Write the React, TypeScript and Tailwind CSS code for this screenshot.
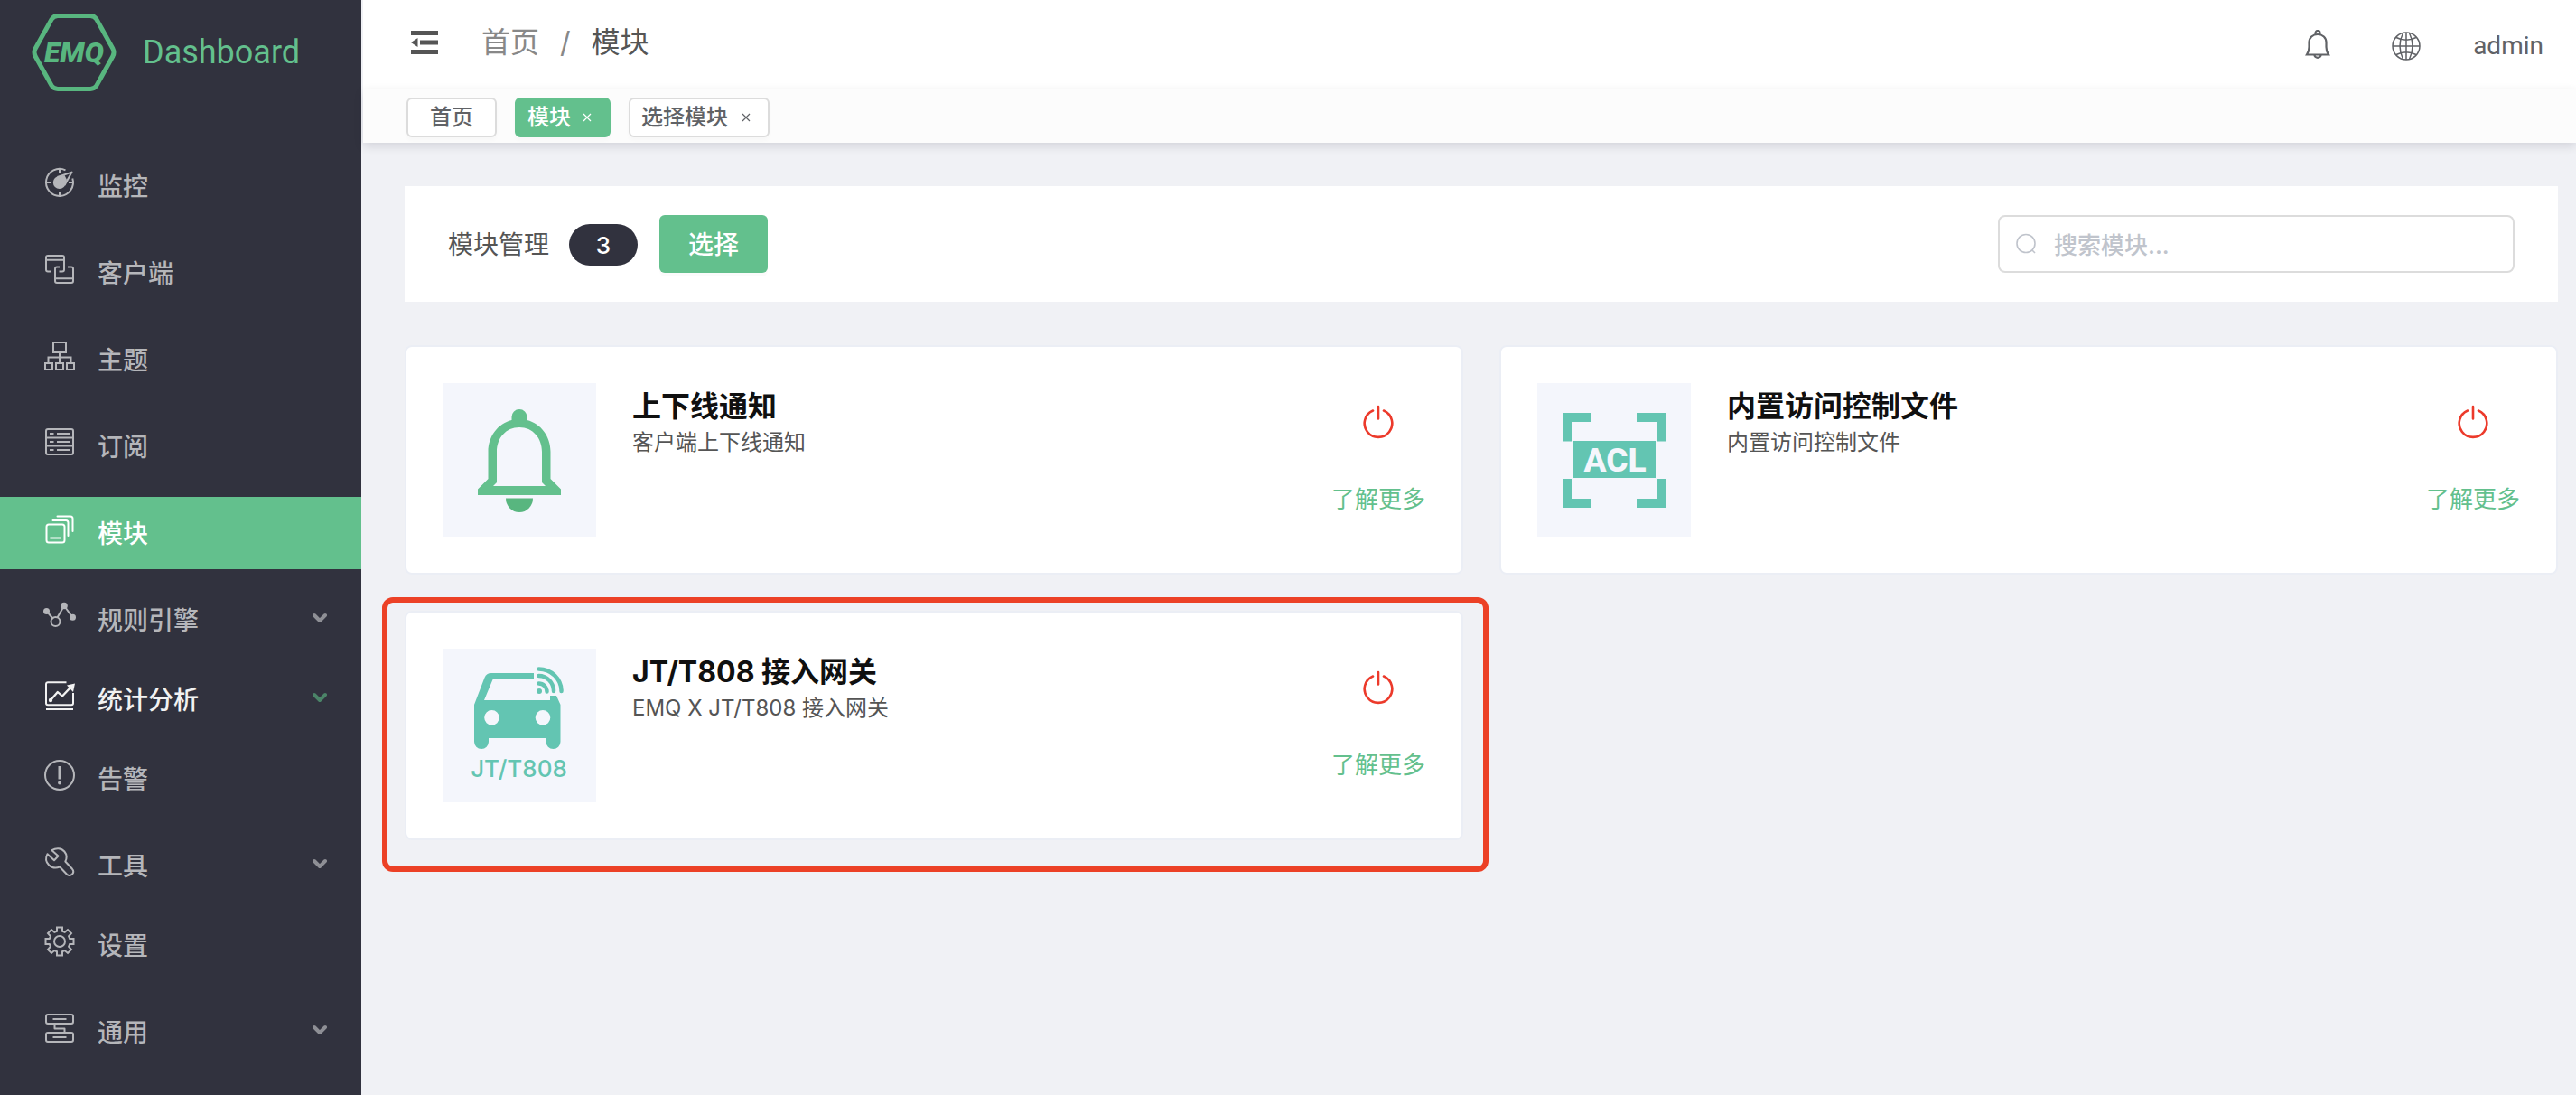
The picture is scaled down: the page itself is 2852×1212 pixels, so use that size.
import React, { type ReactNode } from "react";

const Icon = ({ children, size = 32 }: { children: ReactNode; size?: number }) => (
  <svg
    width={size}
    height={size}
    viewBox="0 0 32 32"
    fill="none"
    stroke="currentColor"
    strokeWidth="2"
    strokeLinejoin="round"
    className="shrink-0 overflow-visible"
    aria-hidden="true"
  >
    {children}
  </svg>
);

const MonitorIcon = () => (
  <Icon>
    <path d="M22.500 2.400A15 15 0 1 0 30.300 11.500" />
    <path d="M16 1v5M16 26v5M1 16h5M26 16h5" />
    <path d="M13.500 10L29.500 4.600L21.500 19" />
    <circle cx="15.800" cy="16" r="7" fill="currentColor" stroke="none" />
    <path d="M15 9.500L21.500 8L24 13L21.500 18.500Z" fill="currentColor" stroke="none" />
  </Icon>
);

const ClientIcon = () => (
  <Icon>
    <path d="M7 18.500H3a2 2 0 0 1-2-2V3a2 2 0 0 1 2-2h16a2 2 0 0 1 2 2v13.500a2 2 0 0 1-2 2h-3.500M1 5.800h20" />
    <path d="M25 13.500h4a2 2 0 0 1 2 2V29a2 2 0 0 1-2 2H13a2 2 0 0 1-2-2V15.500a2 2 0 0 1 2-2h3M11 26.200h20" />
  </Icon>
);

const TopicIcon = () => (
  <Icon>
    <path strokeLinejoin="miter" d="M9 1h14v11H9zM16 12v11M3.500 23v-5.500h25V23M0 24h8v7H0zM12 24h8v7h-8zM24 24h8v7h-8z" />
  </Icon>
);

const SubscribeIcon = () => (
  <Icon>
    <rect x="1" y="1" width="30" height="28" rx="2" />
    <path d="M1 10.500h30M1 19.500h30M5 6h4.500M13 6h14M5 15h4.500M13 15h14M5 24h4.500M13 24h14" />
  </Icon>
);

const ModuleIcon = () => (
  <Icon>
    <rect x="1.500" y="10.500" width="20" height="20" rx="2.500" />
    <path strokeLinecap="round" d="M6 25.500h11M8.500 6H23a2.500 2.500 0 0 1 2.500 2.500V23M13.500 1.500H28a2.500 2.500 0 0 1 2.500 2.500v14" />
  </Icon>
);

const RuleIcon = () => (
  <Icon>
    <path d="M1.500 10.500L9 19M13.500 17.500L21 4.500L30.500 17.500" />
    <circle cx="11.500" cy="22" r="5" />
    <g fill="currentColor" stroke="none">
      <circle cx="1.500" cy="10.500" r="3.500" />
      <circle cx="21" cy="4.500" r="3.800" />
      <circle cx="30.500" cy="17.300" r="3.500" />
    </g>
  </Icon>
);

const StatsIcon = () => (
  <Icon>
    <path d="M23.500 1.200H3a2 2 0 0 0-2 2v21a2 2 0 0 0 2 2h26a2 2 0 0 0 2-2V13M1 31h30" />
    <path d="M6 21L13.800 12L19 16.500L28 7" strokeWidth="2.300" />
    <circle cx="6" cy="21" r="2.200" fill="currentColor" stroke="none" />
    <path d="M24 4.500L33 2.500L31 12Z" fill="currentColor" stroke="none" />
  </Icon>
);

const AlarmIcon = () => (
  <Icon>
    <circle cx="16" cy="16" r="16" />
    <path d="M16 6v14.500" strokeWidth="3" />
    <circle cx="16" cy="24.500" r="1.900" fill="currentColor" stroke="none" />
  </Icon>
);

const ToolIcon = () => (
  <Icon>
    <path d="M7.500 3.200C12 0.200 18 0.500 21.300 4.500C24 7.800 24.200 11.800 22.300 15.500L30 23.800C31.500 25.500 31.500 28 29.800 29.800C28 31.500 25.500 31.300 24 29.800L16.200 21.500C12 23.200 7.500 22.700 4.200 19.500C0.800 16.200 0.200 11.500 2.500 7.200L10 14.200L14.500 9.500Z" />
  </Icon>
);

const SettingsIcon = () => (
  <Icon>
    <path
      strokeLinejoin="miter"
      d="M13 0.500h6v4.300l2.700 1.100 3.300-2.900 4 4-2.900 3.300 1.100 2.700h4.300v6h-4.300l-1.100 2.700 2.900 3.300-4 4-3.300-2.900-2.700 1.100v4.300h-6v-4.300l-2.700-1.100-3.300 2.900-4-4 2.900-3.300-1.100-2.700H0.500v-6h4.300l1.100-2.700-2.900-3.300 4-4 3.300 2.900 2.700-1.100z"
    />
    <circle cx="16" cy="16" r="6" />
  </Icon>
);

const GeneralIcon = () => (
  <Icon>
    <rect x="1" y="1" width="30" height="10" rx="2" />
    <rect x="1" y="21" width="30" height="10" rx="2" />
    <path d="M8.500 6h15M8.500 26h15M10.500 11v5.500h11V21" />
  </Icon>
);

const navItems: { label: string; icon: ReactNode; sub?: boolean; state?: "active" | "open" }[] = [
  { label: "监控", icon: <MonitorIcon /> },
  { label: "客户端", icon: <ClientIcon /> },
  { label: "主题", icon: <TopicIcon /> },
  { label: "订阅", icon: <SubscribeIcon /> },
  { label: "模块", icon: <ModuleIcon />, state: "active" },
  { label: "规则引擎", icon: <RuleIcon />, sub: true },
  { label: "统计分析", icon: <StatsIcon />, sub: true, state: "open" },
  { label: "告警", icon: <AlarmIcon /> },
  { label: "工具", icon: <ToolIcon />, sub: true },
  { label: "设置", icon: <SettingsIcon /> },
  { label: "通用", icon: <GeneralIcon />, sub: true },
];

const Sidebar = () => (
  <aside className="w-[400px] shrink-0 overflow-hidden bg-[#31323e]">
    <div className="flex h-[116px] items-center gap-7 pl-[34px]">
      <svg width="96" height="88" viewBox="0 0 96 88" className="shrink-0" role="img" aria-label="EMQ">
        <path
          d="M30 3.500H66Q70.500 3.500 73 7.500L91 40Q93 44 91 48L73 80.500Q70.500 84.500 66 84.500H30Q25.500 84.500 23 80.500L5 48Q3 44 5 40L23 7.500Q25.500 3.500 30 3.500Z"
          fill="none"
          stroke="#58b67f"
          strokeWidth="5"
        />
        <text x="48" y="55" textAnchor="middle" fill="#58b67f" fontSize="32" fontStyle="italic" fontWeight="900" fontFamily="Roboto, sans-serif">
          EMQ
        </text>
      </svg>
      <span className="font-['Roboto',sans-serif] text-[36px] leading-none text-[#63c08d]">Dashboard</span>
    </div>
    <nav className="pt-[50px]">
      <ul>
        {navItems.map((item) => (
          <li key={item.label} className={item.sub ? "mb-2" : "mb-4"}>
            <a
              href="#"
              className={`flex h-20 items-center gap-[26px] pr-[38px] pl-[50px] text-[28px] font-medium ${
                item.state === "active" ? "bg-[#63c08d] text-white" : item.state === "open" ? "text-[#f2f2f2]" : "text-[#b5b6ba]"
              }`}
            >
              <span className="pb-2">{item.icon}</span>
              <span className="flex-1 pt-0.5">{item.label}</span>
              {item.sub && (
                <svg
                  width="16"
                  height="12"
                  viewBox="0 0 16 12"
                  className={`mb-1 ${item.state === "open" ? "text-[#4b8468]" : "text-[#8e8f95]"}`}
                  fill="none"
                  stroke="currentColor"
                  strokeWidth="4"
                  strokeLinecap="round"
                  strokeLinejoin="round"
                  aria-hidden="true"
                >
                  <path d="M2 3L8 9L14 3" />
                </svg>
              )}
            </a>
          </li>
        ))}
      </ul>
    </nav>
  </aside>
);

const Header = () => (
  <header className="flex h-[98px] items-center bg-white pr-9 pl-[53px]">
    <button type="button" aria-label="折叠菜单" className="mb-1 text-[#555]">
      <svg width="30" height="26" viewBox="0 0 30 26" fill="currentColor" aria-hidden="true">
        <path d="M0 0h30v5H0zM10 10.500h20v5H10zM0 21h30v5H0zM7.500 8v10L0 13z" />
      </svg>
    </button>
    <nav aria-label="面包屑" className="mb-1 ml-12 flex items-center gap-[23px] text-[32px] leading-10 text-[#888]">
      <a href="#">首页</a>
      <span>/</span>
      <span className="text-[#555]">模块</span>
    </nav>
    <div className="ml-auto flex items-center text-[#606266]">
      <button type="button" aria-label="通知" className="mr-[68px]">
        <svg width="28" height="32" viewBox="0 0 28 32" fill="none" stroke="currentColor" strokeWidth="2.200" aria-hidden="true">
          <path d="M2 27.500Q4.500 24 4.500 19V14C4.500 8.500 8.500 5 14 5S23.500 8.500 23.500 14V19Q23.500 24 26 27.500Z" />
          <path d="M11.500 5V3.500A2.500 2.500 0 0 1 16.500 3.500V5M10.500 28A3.500 2.800 0 0 0 17.500 28" />
        </svg>
      </button>
      <button type="button" aria-label="语言" className="mt-1 mr-[58px]">
        <svg width="32" height="32" viewBox="0 0 32 32" fill="none" stroke="currentColor" strokeWidth="1.500" aria-hidden="true">
          <circle cx="16" cy="16" r="15" />
          <path d="M16 1v30M1 16h30M12.500 1.500Q5.500 16 12.500 30.500M19.500 1.500Q26.500 16 19.500 30.500M5 6.500Q16 12 27 6.500M5 25.500Q16 20 27 25.500" />
        </svg>
      </button>
      <button type="button" className="mt-1 font-['Roboto',sans-serif] text-[28px] leading-10">
        admin
      </button>
    </div>
  </header>
);

const CloseMark = () => (
  <svg width="10" height="10" viewBox="0 0 10 10" stroke="currentColor" strokeWidth="1.200" aria-hidden="true">
    <path d="M1 1l8 8M9 1l-8 8" />
  </svg>
);

const tag = "flex h-11 items-center rounded-md border-2 text-2xl font-medium shadow-[0_4px_4px_rgba(0,0,0,0.02)]";

const TagBar = () => (
  <div className="relative flex h-[60px] items-end gap-5 bg-[#fcfcfc] pb-1.5 pl-12 shadow-[0_4px_10px_rgba(0,10,40,0.12)]">
    <a href="#" className={`${tag} border-[#dcdcdc] bg-white px-6 text-[#606266]`}>
      首页
    </a>
    <div className={`${tag} border-[#63c08d] bg-[#63c08d] pr-[19px] pl-3 text-white`}>
      <a href="#">模块</a>
      <button type="button" aria-label="关闭 模块" className="ml-[13px]">
        <CloseMark />
      </button>
    </div>
    <div className={`${tag} border-[#dcdcdc] bg-white pr-[19px] pl-3 text-[#606266]`}>
      <a href="#">选择模块</a>
      <button type="button" aria-label="关闭 选择模块" className="ml-[15px]">
        <CloseMark />
      </button>
    </div>
  </div>
);

const Toolbar = () => (
  <section className="flex h-32 items-center bg-white px-12">
    <h1 className="pt-0.5 text-[28px] text-[#555]">模块管理</h1>
    <span className="mt-0.5 ml-[22px] flex h-[46px] w-[76px] items-center justify-center rounded-full bg-[#31323e] text-[26px] font-medium text-white">
      3
    </span>
    <button
      type="button"
      className="ml-6 h-16 rounded-md bg-[#63c08d] px-8 pt-0.5 text-[28px] font-medium text-white shadow-[0_4px_0_rgba(0,0,0,0.015)]"
    >
      选择
    </button>
    <label className="ml-auto flex h-16 w-[572px] items-center gap-[18px] rounded-lg border-2 border-[#dcdcdc] bg-white pl-[18px]">
      <svg width="24" height="24" viewBox="0 0 24 24" fill="none" stroke="#c0c4cc" strokeWidth="1.600" aria-hidden="true">
        <circle cx="11" cy="11.500" r="10" />
        <path d="M18 19l3 3" />
      </svg>
      <input
        type="search"
        aria-label="搜索模块"
        placeholder="搜索模块..."
        className="min-w-0 flex-1 bg-transparent pt-0.5 text-[26px] font-medium text-[#555] outline-none placeholder:text-[#c0c4cc]"
      />
    </label>
  </section>
);

const BellArt = () => (
  <svg viewBox="0 0 170 170" aria-hidden="true">
    <path
      fill="#63c08d"
      fillRule="evenodd"
      d="M76.500 41V37.500A8.500 8.500 0 0 1 93.500 37.500V41C109 45 119.500 59 119.500 76V106L131 117.500V124H39V117.500L50.500 106V76C50.500 59 61 45 76.500 41ZM85 49C70 49 60 61 60 76V110L56 114H114L110 110V76C110 61 100 49 85 49Z"
    />
    <path fill="#58b67f" d="M70 127.500H100A15 15.500 0 0 1 70 127.500Z" />
  </svg>
);

const AclArt = () => (
  <svg viewBox="0 0 170 170" aria-hidden="true">
    <path
      fill="#63c5b2"
      d="M28 33h32v10H38v21.500H28zM110 33h32v31.500h-10V43h-22zM28 106h10v22h22v10H28zM132 106h10v32h-32v-10h22zM39 64h92v41H39z"
    />
    <text x="86" y="98" textAnchor="middle" fill="#f4f6fc" fontSize="37" fontWeight="800" fontFamily="Roboto, sans-serif">
      ACL
    </text>
  </svg>
);

const CarArt = () => (
  <svg viewBox="0 0 170 170" aria-hidden="true">
    <path
      fill="#63c5b2"
      fillRule="evenodd"
      d="M101 27V33H56L46 57H119V52H126L130.500 62V103A8 8 0 0 1 114.500 103V99H51V103A8 8 0 0 1 35 103V62L46.500 32Q48.500 27 54 27ZM54.500 68A8.300 8.300 0 1 0 54.500 84.600A8.300 8.300 0 1 0 54.500 68ZM111 68A8.300 8.300 0 1 0 111 84.600A8.300 8.300 0 1 0 111 68Z"
    />
    <circle cx="107" cy="47" r="3" fill="#63c5b2" />
    <g fill="none" stroke="#63c5b2" strokeWidth="4.500" strokeLinecap="round">
      <path d="M106.500 38.500A9 9 0 0 1 115.500 47.500M106.500 30A16.500 17 0 0 1 123 47M106.500 22.500A25 24.500 0 0 1 131.500 47" />
    </g>
    <text x="84.500" y="141.500" textAnchor="middle" fill="#63c5b2" fontSize="26" fontWeight="500" fontFamily="Inter, sans-serif">
      JT/T808
    </text>
  </svg>
);

const PowerIcon = () => (
  <svg width="36" height="38" viewBox="0 0 36 38" fill="none" stroke="#ec3a2b" strokeWidth="2.600" strokeLinecap="round" aria-hidden="true">
    <path d="M12 6.500A15.300 15.300 0 1 0 24 6.500M18 2v13.500" />
  </svg>
);

const ModuleCard = ({
  title,
  desc,
  art,
  highlighted = false,
}: {
  title: string;
  desc: string;
  art: ReactNode;
  highlighted?: boolean;
}) => (
  <article className="relative flex rounded-lg border-2 border-[#ebeef5] bg-white p-10">
    <div className="size-[170px] shrink-0 bg-[#f4f6fc]">{art}</div>
    <div className="ml-10 flex-1 pt-0.5">
      <h2 className="text-[32px] leading-[48px] font-bold text-[#101010]">{title}</h2>
      <p className="text-2xl leading-8 text-[#555]">{desc}</p>
    </div>
    <div className="flex flex-col items-center justify-between pt-6 pb-[21px]">
      <button type="button" aria-label={`停用 ${title}`}>
        <PowerIcon />
      </button>
      <a href="#" className="text-[26px] leading-10 text-[#63c08d]">
        了解更多
      </a>
    </div>
    {highlighted && (
      <div className="pointer-events-none absolute -top-[17px] -right-[30px] -bottom-[37px] -left-[27px] rounded-xl border-6 border-[#ec4126]" />
    )}
  </article>
);

export default function App() {
  return (
    <div className="flex min-h-screen bg-[#f0f1f5] font-['Inter','Noto_Sans_CJK_SC',sans-serif]">
      <Sidebar />
      <div className="ml-0.5 min-w-0 flex-1">
        <Header />
        <TagBar />
        <main className="flex flex-col gap-12 pt-12 pr-5 pb-12 pl-[46px]">
          <Toolbar />
          <section className="grid grid-cols-2 gap-10">
            <ModuleCard title="上下线通知" desc="客户端上下线通知" art={<BellArt />} />
            <ModuleCard title="内置访问控制文件" desc="内置访问控制文件" art={<AclArt />} />
            <ModuleCard title="JT/T808 接入网关" desc="EMQ X JT/T808 接入网关" art={<CarArt />} highlighted />
          </section>
        </main>
      </div>
    </div>
  );
}
